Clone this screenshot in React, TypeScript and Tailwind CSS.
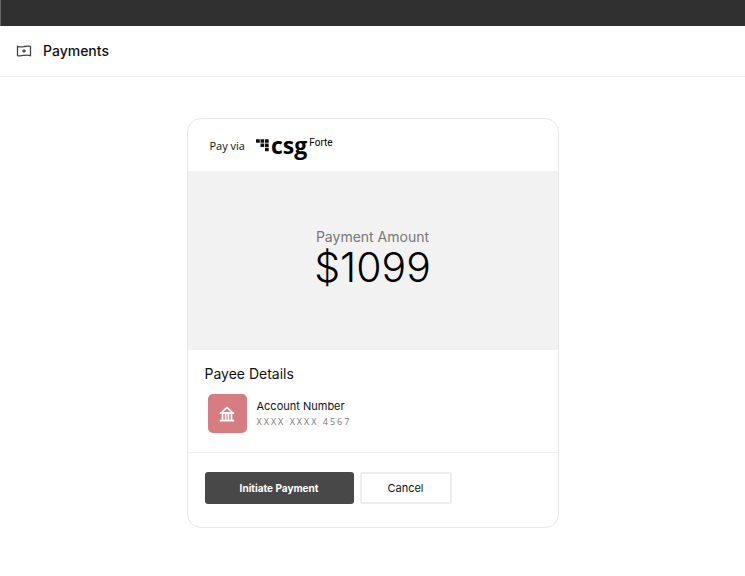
import type { ReactNode } from "react";

function BanknoteIcon() {
  return (
    <svg width="16" height="12" viewBox="0 0 16 12" fill="none" stroke="#444" strokeWidth="1.3" aria-hidden="true">
      <path d="M1.500 1.300C4 2.300 6 2 8 1.600S12 0.700 14.500 1.300V10.600C12 9.900 10 10 8 10.400S4 11.300 1.500 10.600Z" />
      <path d="M8 4.200V7.800M6.200 6H9.800" />
    </svg>
  );
}

function BankIcon() {
  return (
    <svg width="16" height="16" viewBox="0 0 16 16" fill="none" stroke="#fff" strokeWidth="1.7" aria-hidden="true">
      <path d="M8 1.300L2.200 7H13.800Z" strokeLinejoin="round" />
      <path d="M0.800 7.200H15.200M3.500 7V14M6.600 7V14M9.400 7V14M12.500 7V14M0.800 14.600H15.200" />
    </svg>
  );
}

function ForteLogo() {
  return (
    <div className="flex items-start text-black">
      <svg className="mt-1 mr-0.5" width="13" height="13" viewBox="0 0 13 13" fill="#111" aria-hidden="true">
        <path d="M0 0.300H3.800V3.800H0ZM4.500 0.300H8.200V3.800H4.500ZM9 0.300H12.700V3.800H9ZM4.500 4.500H8.200V8H4.500ZM9 4.500H12.700V8H9ZM9 8.700H12.700V12.300H9Z" />
      </svg>
      <span className="font-['Open_Sans',sans-serif] text-[23px] leading-5 font-bold">csg</span>
      <span className="ml-0.5 pt-0.5 font-[Roboto,sans-serif] text-[10px] leading-3">Forte</span>
    </div>
  );
}

function Section({ className, children }: { className: string; children: ReactNode }) {
  return <section className={`px-[17px] ${className}`}>{children}</section>;
}

export default function App() {
  return (
    <div className="min-h-screen bg-white font-[Inter,sans-serif] text-[#111]">
      <div className="h-[26px] border-l border-[#666] bg-[#303030]" />
      <header className="flex items-center gap-[11px] border-b border-[#eee] px-4 py-[15px]">
        <BanknoteIcon />
        <h1 className="text-sm font-medium">Payments</h1>
      </header>

      <main className="px-4 pt-[41px] pb-12">
        <div className="mx-auto max-w-[372px] overflow-hidden rounded-[14px] border border-[#e8e8e8]">
          <div className="flex items-center gap-[11px] px-[22px] pt-4 pb-4">
            <span className="pt-0.5 font-['Open_Sans',sans-serif] text-[11px] leading-4">Pay via</span>
            <ForteLogo />
          </div>

          <Section className="bg-[#f2f2f2] pt-[58px] pb-[61px] text-center">
            <p className="text-sm leading-4 text-[#777]">Payment Amount</p>
            <p className="text-[41px] leading-[44px] font-light text-black">$1099</p>
          </Section>

          <Section className="pt-[14px] pb-[19px]">
            <h2 className="text-sm">Payee Details</h2>
            <div className="mt-2.5 ml-[3px] flex items-center gap-2.5">
              <div className="flex size-[39px] items-center justify-center rounded-[5px] bg-[#d67d82]">
                <BankIcon />
              </div>
              <div>
                <p className="text-[11px] leading-4">Account Number</p>
                <p className="font-['Open_Sans',sans-serif] text-[9px] leading-4 tracking-[2px] text-[#777]">XXXX XXXX 4567</p>
              </div>
            </div>
          </Section>

          <Section className="flex gap-1.5 border-t border-[#eee] pt-[19px] pb-[23px]">
            <button type="button" className="h-8 w-[149px] rounded-[3px] bg-[#484848] text-[10px] font-bold text-white">
              Initiate Payment
            </button>
            <button type="button" className="h-8 w-[92px] rounded-[3px] border-2 border-[#eee] text-[11px]">
              Cancel
            </button>
          </Section>
        </div>
      </main>
    </div>
  );
}
